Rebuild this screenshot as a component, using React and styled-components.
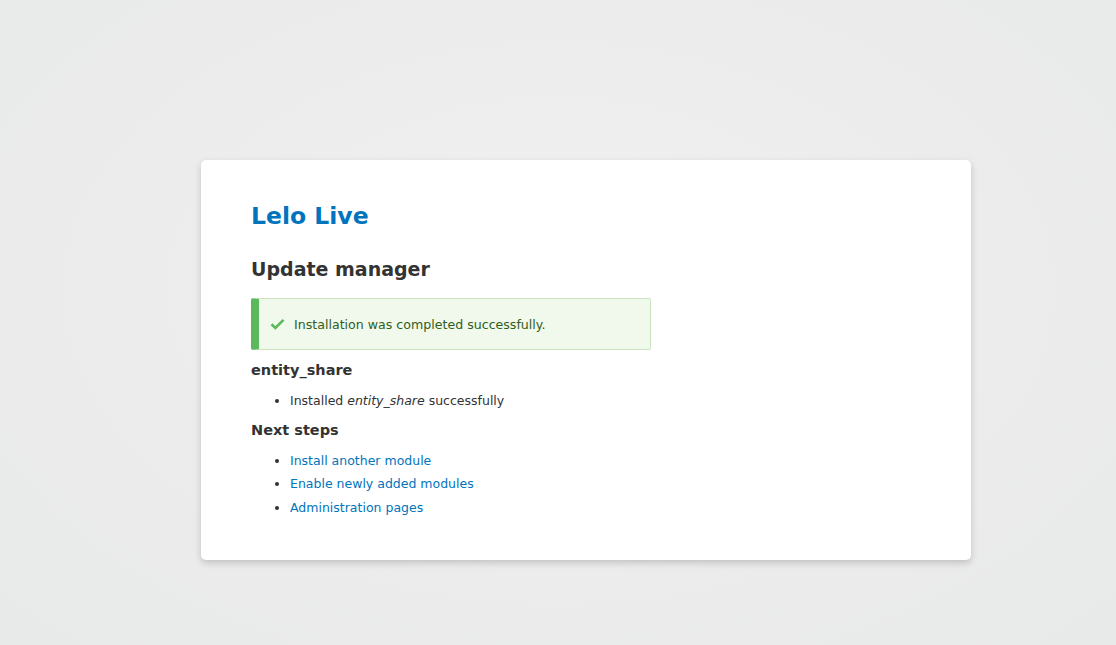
import React from "react";
import styled, { createGlobalStyle } from "styled-components";

const Global = createGlobalStyle`
  html, body { margin: 0; padding: 0; height: 100%; }
  body {
    font-family: "DejaVu Sans", "Liberation Sans", sans-serif;
    background: radial-gradient(ellipse at 50% 45%, #f1f1f1 0%, #ececec 55%, #e8e9e9 100%);
    color: #333;
  }
`;

const Page = styled.div`
  min-height: 645px;
  display: flex;
  justify-content: flex-start;
  align-items: flex-start;
  padding-top: 160px;
  padding-left: 201px;
  box-sizing: border-box;
`;

const Card = styled.main`
  width: 770px;
  height: 400px;
  box-sizing: border-box;
  background: #fff;
  border-radius: 5px;
  box-shadow: 0 3px 7px rgba(0, 0, 0, 0.18);
  padding: 41px 50px;
`;

const SiteName = styled.h1`
  margin: 0;
  font-size: 23.5px;
  font-weight: bold;
  color: #0074bd;
  line-height: 30px;
`;

const PageTitle = styled.h2`
  margin: 26px 0 17px;
  font-size: 19px;
  font-weight: bold;
  color: #333;
  line-height: 24px;
`;

const Message = styled.div`
  width: 400px;
  height: 52px;
  box-sizing: border-box;
  display: flex;
  align-items: center;
  gap: 9px;
  margin-bottom: 9px;
  padding-left: 11px;
  background: #f0f9ec;
  border: 1px solid #c9e1bd;
  border-left: 8px solid #5cb85c;
  border-radius: 2px;
  color: #325e1c;
  font-size: 12.6px;
`;

const Heading = styled.h3`
  margin: 6px 0 8px;
  font-size: 14.5px;
  font-weight: bold;
  color: #333;
  line-height: 22px;
`;

const List = styled.ul`
  margin: 0;
  padding-left: 39px;
  font-size: 12.5px;
  line-height: 23.5px;
  color: #333;
`;

const Link = styled.a`
  color: #0074bd;
  text-decoration: none;
`;

const Check = () => (
  <svg width="15" height="12" viewBox="0 0 15 12" aria-hidden="true">
    <path d="M1.5 6.2 L5.4 10 L13.5 1.8" fill="none" stroke="#5cb85c" strokeWidth="2.6" />
  </svg>
);

export default function App() {
  return (
    <>
      <Global />
      <Page>
        <Card>
          <SiteName>Lelo Live</SiteName>
          <PageTitle>Update manager</PageTitle>
          <Message>
            <Check />
            <span>Installation was completed successfully.</span>
          </Message>
          <Heading>entity_share</Heading>
          <List>
            <li>
              Installed <em>entity_share</em> successfully
            </li>
          </List>
          <Heading>Next steps</Heading>
          <List>
            <li><Link href="#">Install another module</Link></li>
            <li><Link href="#">Enable newly added modules</Link></li>
            <li><Link href="#">Administration pages</Link></li>
          </List>
        </Card>
      </Page>
    </>
  );
}
